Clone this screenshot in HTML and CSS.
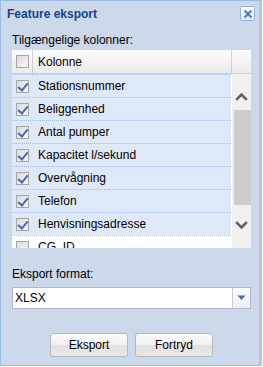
FILE: index.html
```html
<!DOCTYPE html>
<html lang="da">
<head>
  <meta charset="UTF-8">
  <title>Feature eksport</title>
  <link rel="stylesheet" href="styles.css">
</head>
<body>

  <div class="window">
    <div class="win-header">
      <span class="win-title">Feature eksport</span>
      <span class="win-close">
        <svg width="10" height="10" viewBox="0 0 10 10"><path d="M1.5 1.5 L8.5 8.5 M8.5 1.5 L1.5 8.5" stroke="#4f7ab8" stroke-width="2"/></svg>
      </span>
    </div>

    <div class="win-body">
      <div class="field-label">Tilgængelige kolonner:</div>

      <div class="grid">
        <div class="grid-header">
          <div class="cell-check"><span class="chk"></span></div>
          <div class="cell-text">Kolonne</div>
          <div class="cell-scroll"></div>
        </div>

        <div class="grid-body">
          <div class="rows">
            <div class="row sel"><div class="cell-check"><span class="chk on"></span></div><div class="cell-text">Stationsnummer</div></div>
            <div class="row sel"><div class="cell-check"><span class="chk on"></span></div><div class="cell-text">Beliggenhed</div></div>
            <div class="row sel"><div class="cell-check"><span class="chk on"></span></div><div class="cell-text">Antal pumper</div></div>
            <div class="row sel"><div class="cell-check"><span class="chk on"></span></div><div class="cell-text">Kapacitet l/sekund</div></div>
            <div class="row sel"><div class="cell-check"><span class="chk on"></span></div><div class="cell-text">Overvågning</div></div>
            <div class="row sel"><div class="cell-check"><span class="chk on"></span></div><div class="cell-text">Telefon</div></div>
            <div class="row sel"><div class="cell-check"><span class="chk on"></span></div><div class="cell-text">Henvisningsadresse</div></div>
            <div class="row"><div class="cell-check"><span class="chk"></span></div><div class="cell-text">CG_ID</div></div>
          </div>
          <div class="scrollbar">
            <div class="sb-arrow">
              <svg width="13" height="9" viewBox="0 0 13 9"><path d="M1.2 7.8 L6.5 2.5 L11.8 7.8" fill="none" stroke="#5f5f5f" stroke-width="2.6"/></svg>
            </div>
            <div class="sb-track"><div class="sb-thumb"></div></div>
            <div class="sb-arrow">
              <svg width="13" height="9" viewBox="0 0 13 9"><path d="M1.2 1.2 L6.5 6.5 L11.8 1.2" fill="none" stroke="#5f5f5f" stroke-width="2.6"/></svg>
            </div>
          </div>
        </div>
      </div>

      <div class="field-label second">Eksport format:</div>
      <div class="combo">
        <div class="combo-text">XLSX</div>
        <div class="combo-trigger">
          <svg width="9" height="6" viewBox="0 0 9 6"><path d="M0.5 0.5 L8.5 0.5 L4.5 5 Z" fill="#4a6a9a"/></svg>
        </div>
      </div>

      <div class="buttons">
        <button class="btn">Eksport</button>
        <button class="btn">Fortryd</button>
      </div>
    </div>
  </div>

</body>
</html>
```

FILE: styles.css
```css
* {
  margin: 0;
  padding: 0;
  box-sizing: border-box;
}

body, html {
  height: 100%;
  font-family: 'Liberation Sans', Arial, sans-serif;
  font-size: 12px;
  color: #000;
  background: #fff;
  overflow: hidden;
}

/* fenêtre */
.window {
  width: 262px;
  height: 366px;
  background-color: #cbd9ea;
  border: 1px solid #99bbe8;
  border-right: 3px solid #b7c9df;
  display: flex;
  flex-direction: column;
}

.win-header {
  height: 25px;
  display: flex;
  align-items: center;
  justify-content: space-between;
  padding: 0 4px 0 6px;
}

.win-title {
  font-weight: bold;
  font-size: 12px;
  color: #15428b;
}

.win-close {
  width: 15px;
  height: 15px;
  border: 1px solid #8db2e3;
  border-radius: 2px;
  background: linear-gradient(#ffffff, #e3ecf7);
  display: flex;
  align-items: center;
  justify-content: center;
}

.win-body {
  padding: 6px 8px 0 11px;
  display: flex;
  flex-direction: column;
}

.field-label {
  height: 18px;
  line-height: 16px;
}

.field-label.second {
  margin-top: 18px;
}

/* grille */
.grid {
  width: 239px;
  background: #fff;
}

.grid-header {
  height: 24px;
  display: flex;
  background: linear-gradient(#ffffff, #f3f3f3 50%, #ebebeb);
  border-bottom: 1px solid #d0d0d0;
}

.grid-header .cell-check {
  border-right: 1px solid #d0d0d0;
}

.grid-header .cell-text {
  flex: 1;
}

.cell-scroll {
  width: 20px;
  border-left: 1px solid #d0d0d0;
}

.cell-check {
  width: 21px;
  display: flex;
  align-items: center;
  justify-content: center;
  flex-shrink: 0;
}

.cell-text {
  padding-left: 5px;
  display: flex;
  align-items: center;
  white-space: nowrap;
  overflow: hidden;
}

.grid-body {
  height: 174px;
  display: flex;
  overflow: hidden;
}

.rows {
  width: 220px;
  border-right: 1px solid #fff;
}

.row {
  height: 23px;
  display: flex;
  border-top: 1px dotted #a3bae9;
}

.row.sel {
  background-color: #dfe8f6;
}

.row:last-child {
  border-top-color: #a3bae9;
}

.row .cell-text {
  flex: 1;
}

.chk {
  width: 13px;
  height: 13px;
  border: 1px solid #a6a6a6;
  background: linear-gradient(135deg, #d9d9d9, #fbfbfb);
  display: block;
  position: relative;
}

.chk.on::after {
  content: "";
  position: absolute;
  left: 3px;
  top: 0px;
  width: 4px;
  height: 8px;
  border-right: 2px solid #4c67b0;
  border-bottom: 2px solid #4c67b0;
  transform: rotate(40deg);
}

/* barre de défilement */
.scrollbar {
  width: 19px;
  height: 174px;
  background: #f0f0f0;
  display: flex;
  flex-direction: column;
  padding: 13px 0 14px;
}

.sb-arrow {
  height: 18px;
  display: flex;
  align-items: center;
  justify-content: center;
  flex-shrink: 0;
}

.sb-track {
  flex: 1;
  padding: 5px 0 0 2px;
}

.sb-thumb {
  height: 95px;
  background: #cdcdcd;
}

/* liste déroulante */
.combo {
  width: 239px;
  height: 22px;
  display: flex;
  background: #fff;
  border: 1px solid #b5b8c8;
  margin-top: 3px;
}

.combo-text {
  flex: 1;
  padding-left: 2px;
  display: flex;
  align-items: center;
}

.combo-trigger {
  width: 18px;
  border-left: 1px solid #c8ccd8;
  background: linear-gradient(#fbfbfb, #eceef3);
  display: flex;
  align-items: center;
  justify-content: center;
}

/* boutons */
.buttons {
  display: flex;
  justify-content: center;
  gap: 7px;
  margin-top: 24px;
}

.btn {
  width: 78px;
  height: 24px;
  font-family: 'Liberation Sans', Arial, sans-serif;
  font-size: 12px;
  color: #000;
  border: 1px solid #b8b8b8;
  border-radius: 3px;
  background: linear-gradient(#fafafa, #f0f0f0 50%, #e2e2e2 51%, #e8e8e8);
  cursor: pointer;
}
```
